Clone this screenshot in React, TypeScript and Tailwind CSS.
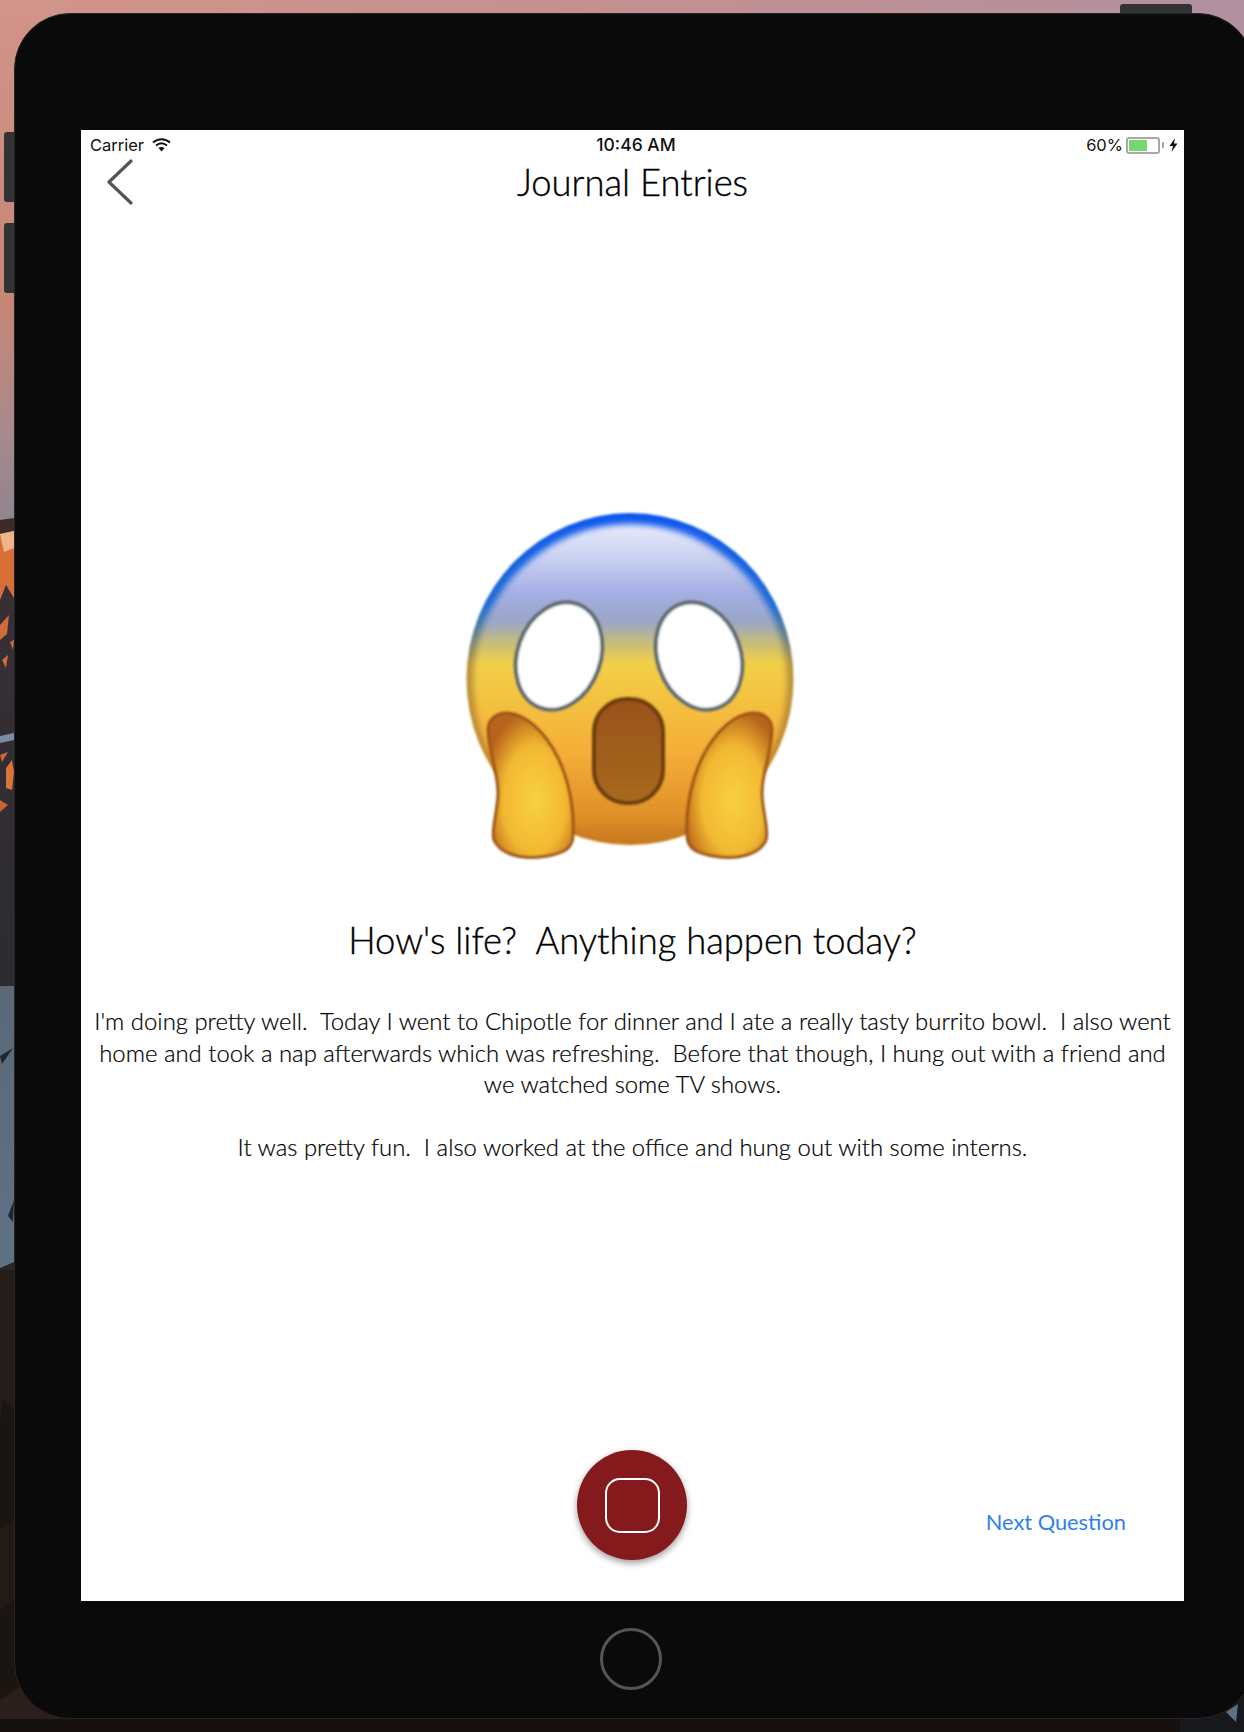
// Journal entry screen inside an iPad simulator frame

const lines = [
  "I'm doing pretty well.  Today I went to Chipotle for dinner and I ate a really tasty burrito bowl.  I also went",
  'home and took a nap afterwards which was refreshing.  Before that though, I hung out with a friend and',
  'we watched some TV shows.',
  ' ',
  'It was pretty fun.  I also worked at the office and hung out with some interns.',
];

const Wallpaper = () => (
  <svg className="absolute inset-0" width="1244" height="1732" viewBox="0 0 1244 1732">
    <defs>
      <linearGradient id="sky" x1="0" y1="0" x2="0" y2="1">
        <stop offset="0" stopColor="#d29488" />
        <stop offset="0.58" stopColor="#c68676" />
        <stop offset="0.82" stopColor="#a88a8c" />
        <stop offset="1" stopColor="#8f8490" />
      </linearGradient>
      <linearGradient id="top" x1="0" y1="0" x2="1" y2="0">
        <stop offset="0" stopColor="#d29488" />
        <stop offset="0.5" stopColor="#c39090" />
        <stop offset="1" stopColor="#b2909f" />
      </linearGradient>
      <linearGradient id="rock" x1="0" y1="0" x2="0" y2="1">
        <stop offset="0" stopColor="#3a3036" />
        <stop offset="1" stopColor="#2c2b30" />
      </linearGradient>
      <linearGradient id="snow" x1="0" y1="0" x2="0" y2="1">
        <stop offset="0" stopColor="#5a6878" />
        <stop offset="1" stopColor="#5f7284" />
      </linearGradient>
    </defs>
    <rect width="80" height="524" fill="url(#sky)" />
    <rect x="0" width="1244" height="16" fill="url(#top)" />
    <rect x="1180" width="64" height="70" fill="#b2909f" />
    <rect y="524" width="16" height="462" fill="url(#rock)" />
    <path d="M0 520 L14 518 L14 531 L0 534Z" fill="#3d2b28" />
    <path d="M0 534 L14 531 L14 598 L6 585 L0 600Z" fill="#d66e38" />
    <path d="M0 534 L14 531 L14 548 L4 552Z" fill="#f0b48a" />
    <path d="M0 625 L9 615 L7 634 L0 640Z M10 642 L14 640 L13 650Z M2 660 L8 655 L6 668Z" fill="#cf6d3a" />
    <path d="M0 736 L14 733 L14 740 L0 743Z" fill="#7b8da0" />
    <path d="M0 755 L8 752 L2 762Z" fill="#d06a35" />
    <path d="M6 768 L12 760 L14 772 L12 790 L6 788Z" fill="#d9733c" />
    <path d="M0 800 L8 805 L0 812Z" fill="#c9652f" />
    <rect y="986" width="16" height="284" fill="url(#snow)" />
    <path d="M0 1056 L13 1048 L2 1064Z M8 1216 L14 1200 L13 1222Z" fill="#22262c" />
    <path d="M0 1268 L14 1262 L14 1272 L0 1272Z" fill="#2b2522" />
    <rect y="1270" width="16" height="462" fill="#1b1512" />
    <path d="M0 1270 L14 1270 L14 1410 L3 1400 L0 1420Z" fill="#241c18" />
    <path d="M0 1530 L14 1520 L14 1600 L0 1610Z" fill="#231a16" />
    <rect y="1650" width="80" height="82" fill="#1b1512" />
    <path d="M0 1700 L30 1680 L70 1732 L0 1732Z" fill="#2a1f1a" />
    <rect y="1719" width="1244" height="13" fill="#16110f" />
    <rect x="1180" y="1660" width="64" height="72" fill="#16181c" />
    <path d="M1226 1712 L1238 1704 L1236 1722Z" fill="#5d7186" />
  </svg>
);

const ScaredFace = () => (
  <svg width="370" height="390" viewBox="0 0 370 390" className="block">
    <defs>
      <linearGradient id="face" x1="0" y1="0" x2="0" y2="1">
        <stop offset="0" stopColor="#e8ebfb" />
        <stop offset="0.12" stopColor="#c6cdf0" />
        <stop offset="0.22" stopColor="#a3aee3" />
        <stop offset="0.31" stopColor="#9aa6c8" />
        <stop offset="0.37" stopColor="#c2bb80" />
        <stop offset="0.44" stopColor="#f2d048" />
        <stop offset="0.72" stopColor="#f5ae38" />
        <stop offset="0.93" stopColor="#df8f28" />
        <stop offset="1" stopColor="#c87a1e" />
      </linearGradient>
      <linearGradient id="rim" x1="0" y1="0" x2="0" y2="1">
        <stop offset="0" stopColor="#0f58ee" />
        <stop offset="0.28" stopColor="#1f6cd4" />
        <stop offset="0.36" stopColor="#5c808f" />
        <stop offset="0.46" stopColor="#b8923a" />
        <stop offset="1" stopColor="#c97a20" />
      </linearGradient>
      <linearGradient id="mouth" x1="0" y1="0" x2="0" y2="1">
        <stop offset="0" stopColor="#9a5219" />
        <stop offset="1" stopColor="#a76a20" />
      </linearGradient>
      <radialGradient id="hand" cx="0.55" cy="0.6" r="0.62">
        <stop offset="0" stopColor="#f8d140" />
        <stop offset="0.6" stopColor="#f2b832" />
        <stop offset="1" stopColor="#b8641a" />
      </radialGradient>
      <filter id="soft" x="-5%" y="-5%" width="110%" height="110%">
        <feGaussianBlur stdDeviation="1" />
      </filter>
      <filter id="softer" x="-5%" y="-5%" width="110%" height="110%">
        <feGaussianBlur stdDeviation="3" />
      </filter>
    </defs>
    <g filter="url(#soft)">
      <ellipse cx="190" cy="189" rx="163.5" ry="166" fill="url(#rim)" />
    </g>
    <ellipse cx="190" cy="192" rx="157" ry="158" fill="url(#face)" filter="url(#softer)" />
    <g filter="url(#soft)">
      <ellipse cx="119" cy="166" rx="41.5" ry="55" transform="rotate(20 119 166)" fill="#ffffff" stroke="#5f6a70" strokeWidth="4" />
      <ellipse cx="259" cy="166" rx="41.5" ry="55" transform="rotate(-20 259 166)" fill="#ffffff" stroke="#5f6a70" strokeWidth="4" />
      <rect x="154" y="209" width="69" height="104" rx="33" fill="url(#mouth)" stroke="#6a3c10" strokeWidth="4" />
      <path d="M67 223 C85 224 104 240 118 268 C129 292 134 320 133 345 C133 358 125 364 100 367 C80 369 60 364 54 350 C51 340 57 325 58 305 C59 285 49 265 48 240 C48 230 55 223 67 223Z" fill="url(#hand)" stroke="#9c5416" strokeWidth="3" />
      <path d="M313 223 C295 224 276 240 262 268 C251 292 246 320 247 345 C247 358 255 364 280 367 C300 369 320 364 326 350 C329 340 323 325 322 305 C321 285 331 265 332 240 C332 230 325 223 313 223Z" fill="url(#hand)" stroke="#9c5416" strokeWidth="3" />
    </g>
  </svg>
);

const StatusBar = () => (
  <div className="grid h-[28px] grid-cols-3 items-center pl-[9px] pr-[6px] pt-[2px] font-['Inter',sans-serif] text-[16.5px] text-[#111]">
    <div className="flex items-center gap-[8px]">
      <span>Carrier</span>
      <svg width="19" height="14" viewBox="0 0 19 14">
        <path d="M1 4.5 C6 0 13 0 18 4.5" fill="none" stroke="#111" strokeWidth="2" />
        <path d="M4 7.5 C7.5 4.6 11.5 4.6 15 7.5" fill="none" stroke="#111" strokeWidth="2" />
        <path d="M6.5 10 C8.5 8.5 10.5 8.5 12.5 10 L9.5 13.5Z" fill="#111" />
      </svg>
    </div>
    <div className="pl-[4px] text-center text-[17.5px] font-medium">10:46 AM</div>
    <div className="flex items-center justify-end gap-[5px]">
      <span className="mr-[-2px]">60%</span>
      <div className="flex items-center gap-[2px]">
        <div className="h-[17px] w-[34px] rounded-[3px] border-2 border-[#a8a8a8] p-[1px]">
          <div className="h-full w-[18px] bg-[#76d672]" />
        </div>
        <div className="h-[6px] w-[2px] bg-[#a8a8a8]" />
      </div>
      <svg width="9" height="14" viewBox="0 0 9 14">
        <path d="M6 0 L0.5 8 L4 8 L2.5 14 L8.5 5.5 L5 5.5Z" fill="#111" />
      </svg>
    </div>
  </div>
);

export default function App() {
  return (
    <div className="relative h-[1732px] w-[1244px] overflow-hidden bg-[#16110f]">
      <Wallpaper />

      {/* Simulator frame */}
      <div className="absolute left-[1120px] top-[4px] h-[12px] w-[72px] rounded-t-[3px] bg-[#333]" />
      <div className="absolute left-[4px] top-[132px] h-[70px] w-[14px] rounded-l-[3px] bg-[#333]" />
      <div className="absolute left-[4px] top-[223px] h-[70px] w-[14px] rounded-l-[3px] bg-[#333]" />

      <div className="absolute left-[14px] top-[13px] flex h-[1706px] w-[1240px] flex-col items-start rounded-[56px] border border-[#262626] bg-[#0a0a0a] pl-[66px] pt-[116px]">
        <div className="flex h-[1471px] w-[1103px] flex-col bg-white">
          <StatusBar />

          <div className="grid h-[50px] grid-cols-[1fr_auto_1fr] items-start pl-[25px]">
            <svg width="27" height="46" viewBox="0 0 27 46" className="mt-[1px]">
              <path d="M25 2 L3 23 L25 44" fill="none" stroke="#555" strokeWidth="3.2" strokeLinecap="round" strokeLinejoin="round" />
            </svg>
            <h1 className="mr-[25px] mt-[2px] font-['Lato',sans-serif] text-[36.4px] font-light leading-[44px] text-black [-webkit-text-stroke:0.35px_black]">Journal Entries</h1>
            <div />
          </div>

          <div className="mr-[15px] mt-[282px] flex justify-center">
            <ScaredFace />
          </div>

          <h2 className="mt-[38px] whitespace-pre text-center font-['Lato',sans-serif] text-[36.4px] font-light leading-[44px] text-black [-webkit-text-stroke:0.35px_black]">
            How's life?  Anything happen today?
          </h2>

          <div className="mt-[43px] text-center font-['Lato',sans-serif] text-[23.9px] font-light leading-[31.5px] text-black [-webkit-text-stroke:0.2px_black]">
            {lines.map((line, i) => (
              <p key={i} className="whitespace-pre">
                {line}
              </p>
            ))}
          </div>

          <div className="mt-auto grid grid-cols-3 items-center pb-[41px]">
            <div />
            <div className="flex justify-center">
              <button className="flex h-[110px] w-[110px] items-center justify-center rounded-full bg-[#841a1c] shadow-[0_3px_7px_rgba(0,0,0,0.4)]">
                <span className="h-[55px] w-[55px] rounded-[15px] border-2 border-white" />
              </button>
            </div>
            <div className="pr-[58px] pt-[34px] text-right font-['Lato',sans-serif] text-[21.8px] text-[#2f7fef]">
              Next Question
            </div>
          </div>
        </div>

        {/* Home button */}
        <div className="ml-[519px] mt-[27px] h-[62px] w-[62px] rounded-full border-[3px] border-[#555]" />
      </div>
    </div>
  );
}
